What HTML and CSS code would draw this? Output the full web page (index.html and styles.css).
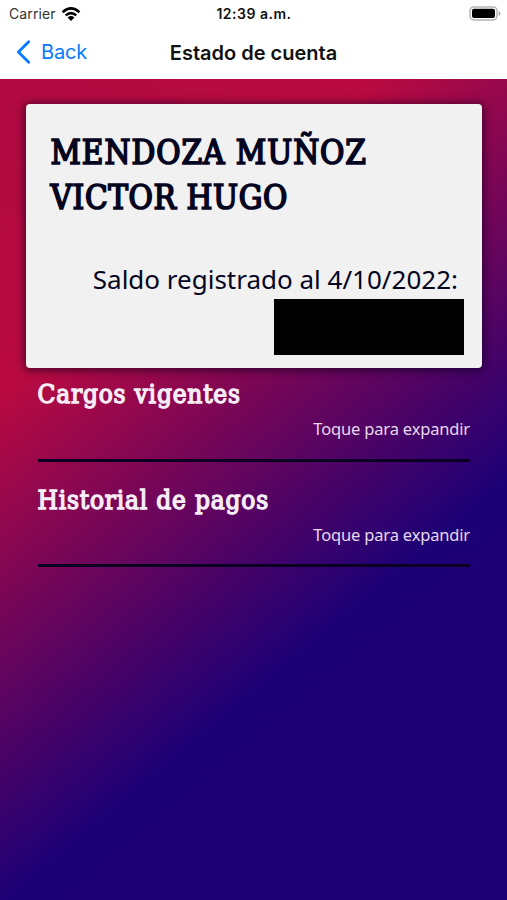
FILE: index.html
```html
<!DOCTYPE html>
<html lang="es">
<head>
<meta charset="utf-8">
<title>Estado de cuenta</title>
<link rel="stylesheet" href="styles.css">
</head>
<body>
<header class="top">
  <div class="status">
    <div class="carrier"><span>Carrier</span>
      <svg width="20" height="14" viewBox="0 0 20 14" fill="none" stroke="#000" stroke-width="2.5"><path d="M1.6 5.2Q10-2.4 18.4 5.2M4.7 8.4Q10 3.8 15.3 8.4"/><path d="M10 14L6.6 10.5Q10 7.7 13.4 10.5Z" fill="#000" stroke="none"/></svg>
    </div>
    <time class="time">12:39 a.m.</time>
    <svg class="battery" width="32" height="15" viewBox="0 0 32 15"><rect x="1" y=".9" width="27" height="13" rx="3.8" fill="#fff" stroke="#b5b5b5" stroke-width="1.5"/><rect x="3" y="2.8" width="23" height="9.2" rx="2" fill="#000"/><path d="M29.6 5v5q1.8-.8 1.8-2.5T29.6 5Z" fill="#aaa"/></svg>
  </div>
  <nav class="nav">
    <a class="back"><svg width="15" height="24" viewBox="0 0 15 24" fill="none" stroke="#087aff" stroke-width="2.8" stroke-linecap="round" stroke-linejoin="round"><path d="M12.7 1.8L2.4 12L12.7 22.2"/></svg><span>Back</span></a>
    <h1 class="title">Estado de cuenta</h1>
    <span></span>
  </nav>
</header>
<main class="content">
  <section class="card">
    <h2 class="name"><span class="first">MENDOZA MUÑOZ</span><br><span class="second">VICTOR HUGO</span></h2>
    <p class="balance">Saldo registrado al 4/10/2022:</p>
    <div class="redacted"></div>
  </section>
  <section class="group">
    <h3 class="heading charges">Cargos vigentes</h3>
    <p class="hint">Toque para expandir</p>
  </section>
  <section class="group">
    <h3 class="heading history">Historial de pagos</h3>
    <p class="hint">Toque para expandir</p>
  </section>
</main>
</body>
</html>
```
FILE: styles.css
```css
* { box-sizing: border-box; }
body, h1, h2, h3, p { margin: 0; }
body { width: 507px; height: 900px; display: flex; flex-direction: column; overflow: hidden; font-family: Inter, sans-serif; }
svg { display: block; flex: none; }
.top { height: 79px; flex: none; background: #fff; }
.status { height: 27px; display: grid; grid-template-columns: 1fr auto 1fr; align-items: center; padding: 0 6px 0 9px; color: #111; }
.carrier { display: flex; align-items: center; gap: 5px; font-size: 14px; letter-spacing: .1px; color: #333; }
.time { font-size: 14px; font-weight: 600; letter-spacing: .5px; margin-right: 2px; }
.battery { justify-self: end; }
.nav { height: 50px; display: grid; grid-template-columns: 1fr auto 1fr; align-items: center; padding: 0 16px; }
.back { display: flex; align-items: center; gap: 10px; color: #087aff; font-size: 20px; letter-spacing: -.15px; }
.title { font-size: 20px; line-height: 24px; font-weight: 600; letter-spacing: 0; color: #111; padding-top: 1px; }
.content { flex: 1; padding: 25px 25px 0 25.5px; background: linear-gradient(140deg, #b10a43 0%, #b90a41 25.5%, #1c0076 66.5%, #1d0074 72%); }
.card { height: 264px; padding: 26px 18px 13px 25px; border-radius: 4px; background: #f1f1f1; box-shadow: 0 1px 8px 2px rgba(0, 0, 25, .55); color: #05051f; display: flex; flex-direction: column; align-items: flex-end; }
.name { align-self: flex-start; font: 400 33px/45px "DejaVu Serif Condensed", "DejaVu Serif", serif; font-stretch: condensed; white-space: nowrap; -webkit-text-stroke: 1.7px #05051f; }
.first { letter-spacing: .95px; }
.second { letter-spacing: .6px; }
.balance { margin: 39px 6px 0 0; font: 26px/40px "Noto Sans", sans-serif; white-space: nowrap; }
.redacted { width: 190px; height: 57px; margin-top: auto; background: #000; }
.group { margin: 0 12px; height: 105.5px; padding-top: 8px; border-bottom: 3px solid #090022; color: #f5eef8; }
.group:nth-of-type(2) { height: 94px; }
.group:nth-of-type(3) { height: 105px; padding-top: 20px; }
.heading { font: 400 26px/36px "DejaVu Serif Condensed", "DejaVu Serif", serif; font-stretch: condensed; letter-spacing: .8px; white-space: nowrap; -webkit-text-stroke: 1.3px #f5eef8; }
.hint { text-align: right; font: 16.5px/24px "Noto Sans", sans-serif; letter-spacing: -.17px; margin-top: 5px; color: #e8d9ed; }
```
